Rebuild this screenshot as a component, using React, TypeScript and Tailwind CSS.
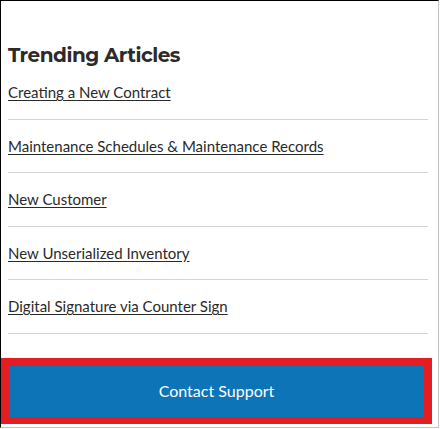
export default function App() {
  const articles = [
    "Creating a New Contract",
    "Maintenance Schedules & Maintenance Records",
    "New Customer",
    "New Unserialized Inventory",
    "Digital Signature via Counter Sign",
  ];

  return (
    <div className="w-[439px] h-[428px] bg-white border-l border-t border-black border-r border-b border-r-[#c4c4c4] border-b-[#c4c4c4] flex flex-col">
      <div className="pl-[7px] pr-[10px] pt-[41px]">
        <h2 className="text-[20px] leading-[26px] font-bold text-[#2d2a2a] font-['Montserrat','DejaVu_Sans',sans-serif] tracking-[-0.5px]">
          Trending Articles
        </h2>
        <ul className="-mt-[2px]">
          {articles.map((a) => (
            <li key={a} className="border-b border-[#d4d4d4] pt-4 pb-4 leading-[20.5px]">
              <a href="#" className="text-[15px] text-[#2a2a2a] underline underline-offset-2 font-['Lato',sans-serif]">
                {a}
              </a>
            </li>
          ))}
        </ul>
      </div>
      <button className="mt-[24px] w-[431px] h-[66px] border-8 border-b-[7px] border-[#e41d22] bg-[#0e74b8] text-white text-[16px] font-['Lato',sans-serif]">
        Contact Support
      </button>
    </div>
  );
}
